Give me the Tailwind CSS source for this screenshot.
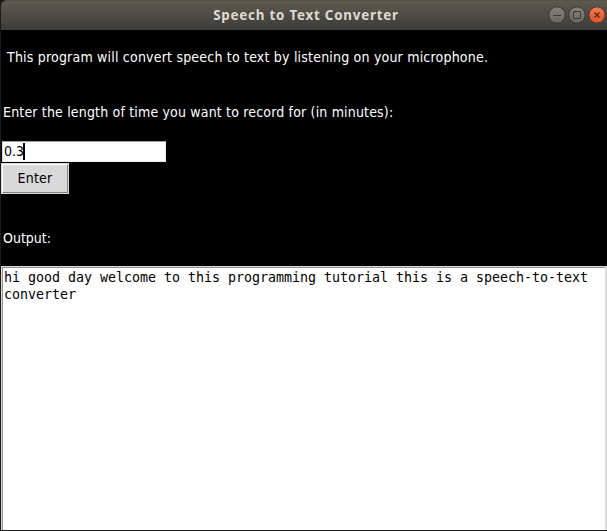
<!DOCTYPE html>
<html lang="en">
<head>
<meta charset="utf-8">
<title>Speech to Text Converter</title>
<script src="https://cdn.jsdelivr.net/npm/@tailwindcss/browser@4"></script>
</head>
<body class="flex h-[531px] w-[607px] flex-col overflow-hidden bg-[#1b1b1b] pb-px pl-px text-[14px] leading-4 tracking-[0.2px] font-['DejaVu_Sans_Condensed','DejaVu_Sans',sans-serif] [font-stretch:condensed]">
  <header class="grid h-[30px] shrink-0 grid-cols-[1fr_auto_1fr] items-center rounded-tl-[6px] border-t border-[#55534a] bg-linear-to-b from-[#5d5a50] to-[#3d3c38] pr-px">
    <span></span>
    <h1 class="-mt-[2px] whitespace-nowrap pl-[5px] text-[13.33px] font-bold tracking-[0.8px] text-[#dfdbd2] font-['Noto_Sans',sans-serif] [font-stretch:normal]">Speech to Text Converter</h1>
    <div class="flex justify-end">
      <svg class="h-[21px] w-[58px]" viewBox="0 0 58 21" fill="none">
        <defs>
          <linearGradient id="gray" x1="0" y1="0" x2="0" y2="1"><stop stop-color="#85837a"/><stop offset="1" stop-color="#686761"/></linearGradient>
          <linearGradient id="red" x1="0" y1="0" x2="0" y2="1"><stop stop-color="#f67a50"/><stop offset="1" stop-color="#e2511f"/></linearGradient>
        </defs>
        <circle cx="9" cy="10" r="8.200" fill="url(#gray)" stroke="#393833"/>
        <circle cx="29" cy="10" r="8.200" fill="url(#gray)" stroke="#393833"/>
        <circle cx="49" cy="10" r="8.200" fill="url(#red)" stroke="#393833"/>
        <path d="M5 10.500h8M25.500 6.500h7v7h-7z" stroke="#3c3b37"/>
        <path d="M46.500 7.500l5 5M51.500 7.500l-5 5" stroke="#45301f" stroke-width="1.300"/>
      </svg>
    </div>
  </header>
  <main class="flex grow flex-col items-start bg-black text-white">
    <p class="mt-[19px] ml-[6px] whitespace-nowrap">This program will convert speech to text by listening on your microphone.</p>
    <p class="mt-[39px] ml-[2px] whitespace-nowrap tracking-[0.17px]">Enter the length of time you want to record for (in minutes):</p>
    <div class="mt-[21px] ml-px flex h-[21px] w-[164px] items-center border border-t-[#a3a0a0] border-r-[#e8e8e8] border-b-[#e8e8e8] border-l-[#d9d9d9] bg-white pl-px text-black">
      <span class="pb-[2px] tracking-normal">0.3</span><span class="-ml-px h-[17px] w-[2px] bg-black"></span>
    </div>
    <button class="mt-px h-[31px] w-[68px] border border-[#d9d9d9] bg-[#d9d9d9] text-black">
      <span class="flex h-full items-center justify-center border border-t-white border-r-[#828282] border-b-[#828282] border-l-white pb-[2px] tracking-[0.2px]">Enter</span>
    </button>
    <p class="mt-[36px] ml-[2px] tracking-normal">Output:</p>
    <div class="mt-[20px] w-full grow border border-r-2 border-b-0 border-[#d9d9d9] bg-white">
      <div class="h-full border-t border-l border-[#969292] pt-px pl-px text-[13.33px] leading-[17px] tracking-[-0.025px] whitespace-pre text-black font-['DejaVu_Sans_Mono',monospace] [font-stretch:normal]">hi good day welcome to this programming tutorial this is a speech-to-text
converter</div>
    </div>
  </main>
</body>
</html>
